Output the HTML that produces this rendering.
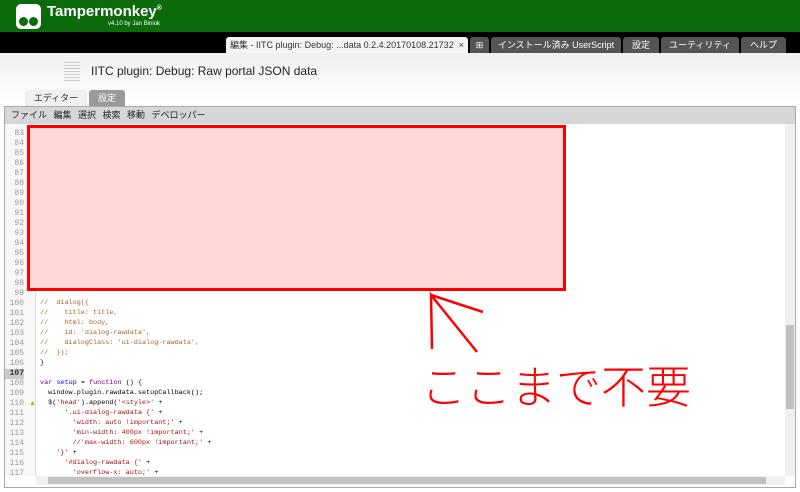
<!DOCTYPE html>
<html><head><meta charset="utf-8">
<style>
*{margin:0;padding:0;box-sizing:border-box}
body{width:800px;height:492px;overflow:hidden;background:#fff;font-family:"Liberation Sans","Noto Sans CJK JP",sans-serif;position:relative}
.hdr{position:absolute;left:0;top:0;width:800px;height:32px;background:#0b6b0b}
.logo{position:absolute;left:16px;top:4px;width:25px;height:25px;background:#fff;border-radius:5px}
.logo i{position:absolute;top:13px;width:9px;height:9px;background:#0b6b0b;border-radius:50%}
.t1{position:absolute;left:47px;top:3px;color:#fff;font-size:15px;font-weight:bold}
.t2{position:absolute;left:108px;top:21px;color:#fff;font-size:6px}
.blk{position:absolute;left:0;top:32px;width:800px;height:21px;background:#000}
.tab{position:absolute;top:37px;height:16px;background:#555;color:#fff;font-size:9px;line-height:16px;text-align:center;border-radius:3px 3px 0 0}
.tab.a{background:#f4f4f4;color:#333}
.top{position:absolute;left:0;top:53px;width:800px;height:54px;background:linear-gradient(#f0f0f0,#fff)}
.doc{position:absolute;left:64px;top:62px;width:16px;height:20px;background:repeating-linear-gradient(#ccc 0 1px,#f6f6f6 1px 3px)}
.title{position:absolute;left:91px;top:64px;font-size:12px;color:#222}
.st{position:absolute;top:90px;height:16px;font-size:9px;line-height:16px;text-align:center;border-radius:3px 3px 0 0}
.frame{position:absolute;left:4px;top:106px;width:792px;height:382px;border:1px solid #aaa;background:#fff}
.menu{position:absolute;left:5px;top:107px;width:790px;height:17px;background:#d6d6d6;font-size:9px;line-height:17px;color:#222;padding-left:6px;word-spacing:4px}
.gut{position:absolute;left:5px;top:124px;width:31px;height:352px;background:#f7f7f7;border-right:1px solid #ddd}
.ln{position:absolute;left:5px;width:19px;text-align:right;font-family:"Liberation Mono",monospace;font-size:8px;color:#999;line-height:10px;height:10px}
.code{position:absolute;left:40px;font-family:"Liberation Mono","Noto Sans CJK JP",monospace;font-size:6.8px;line-height:10px;white-space:pre;color:#000}
.c{color:#a0662c}.s{color:#a11}.k{color:#708}.d{color:#00f}
.box{position:absolute;left:27px;top:125px;width:539px;height:166px;border:3px solid #f00;background:#ffd8d8}
.vs{position:absolute;left:785px;top:124px;width:10px;height:352px;background:#f0f0f0}
.vt{position:absolute;left:786px;top:325px;width:8px;height:84px;background:#c1c1c1}
.hs{position:absolute;left:36px;top:476px;width:749px;height:9px;background:#f0f0f0}
.ht{position:absolute;left:48px;top:477px;width:718px;height:7px;background:#c1c1c1}
.ann{position:absolute;left:421px;top:354px;font-size:45px;color:#f00;font-family:"Noto Sans CJK JP",sans-serif;font-weight:300;line-height:60px;letter-spacing:0px;white-space:nowrap}
</style></head><body>
<div class="hdr"><div class="logo"><i style="left:3px"></i><i style="left:13px"></i></div>
<div class="t1">Tampermonkey<sup style="font-size:7px">®</sup></div><div class="t2">v4.10 by Jan Biniok</div></div>
<div class="blk"></div>
<div class="tab a" style="left:226px;width:242px">編集 - IITC plugin: Debug: ...data 0.2.4.20170108.21732 &nbsp;×</div>
<div class="tab" style="left:470px;width:19px">⊞</div>
<div class="tab" style="left:491px;width:130px">インストール済み UserScript</div>
<div class="tab" style="left:623px;width:36px">設定</div>
<div class="tab" style="left:661px;width:78px">ユーティリティ</div>
<div class="tab" style="left:741px;width:45px">ヘルプ</div>
<div class="top"></div>
<div class="doc"></div>
<div class="title">IITC plugin: Debug: Raw portal JSON data</div>
<div class="st" style="left:25px;width:62px;background:#f0f0f0;color:#333">エディター</div>
<div class="st" style="left:89px;width:36px;background:#999;color:#fff">設定</div>
<div class="frame"></div>
<div class="menu">ファイル 編集 選択 検索 移動 デベロッパー</div>
<div class="gut"></div>
<div class="ln" style="top:129px">83</div><div class="ln" style="top:139px">84</div><div class="ln" style="top:149px">85</div><div class="ln" style="top:159px">86</div><div class="ln" style="top:169px">87</div><div class="ln" style="top:179px">88</div><div class="ln" style="top:189px">89</div><div class="ln" style="top:199px">90</div><div class="ln" style="top:209px">91</div><div class="ln" style="top:219px">92</div><div class="ln" style="top:229px">93</div><div class="ln" style="top:239px">94</div><div class="ln" style="top:249px">95</div><div class="ln" style="top:259px">96</div><div class="ln" style="top:269px">97</div><div class="ln" style="top:279px">98</div><div class="ln" style="top:289px">99</div><div class="ln" style="top:299px">100</div><div class="ln" style="top:309px">101</div><div class="ln" style="top:319px">102</div><div class="ln" style="top:329px">103</div><div class="ln" style="top:339px">104</div><div class="ln" style="top:349px">105</div><div class="ln" style="top:359px">106</div><div class="ln" style="top:369px;background:#ccc;color:#333;font-weight:bold;width:19px">107</div><div class="ln" style="top:379px">108</div><div class="ln" style="top:389px">109</div><div class="ln" style="top:399px">110</div><div class="ln" style="top:409px">111</div><div class="ln" style="top:419px">112</div><div class="ln" style="top:429px">113</div><div class="ln" style="top:439px">114</div><div class="ln" style="top:449px">115</div><div class="ln" style="top:459px">116</div><div class="ln" style="top:469px">117</div>
<div style="position:absolute;left:29px;top:400px;font-size:7px;color:#e8a000">▲</div>
<div class="code" style="top:298px"><span class="c">//  dialog({
//    title: title,
//    html: body,
//    id: 'dialog-rawdata',
//    dialogClass: 'ui-dialog-rawdata',
//  });</span>
}

<span class="k">var</span> <span class="d">setup</span> = <span class="k">function</span> () {
  window.plugin.rawdata.setupCallback();
  $(<span class="s">'head'</span>).append(<span class="s">'&lt;style&gt;'</span> +
      <span class="s">'.ui-dialog-rawdata {'</span> +
        <span class="s">'width: auto !important;'</span> +
        <span class="s">'min-width: 400px !important;'</span> +
        <span class="s">//'max-width: 600px !important;'</span> +
    <span class="s">'}'</span> +
      <span class="s">'#dialog-rawdata {'</span> +
        <span class="s">'overflow-x: auto;'</span> +</div>
<div class="box"></div>
<div class="vs"></div><div class="vt"></div>
<div class="hs"></div><div class="ht"></div>
<svg style="position:absolute;left:0;top:0" width="800" height="492"><g stroke="#f00" stroke-width="2.5" fill="none"><path d="M432 349 L431 295 L477 352 M431 295 L483 312"/></g></svg>
<div class="ann">ここまで不要</div>
</body></html>
